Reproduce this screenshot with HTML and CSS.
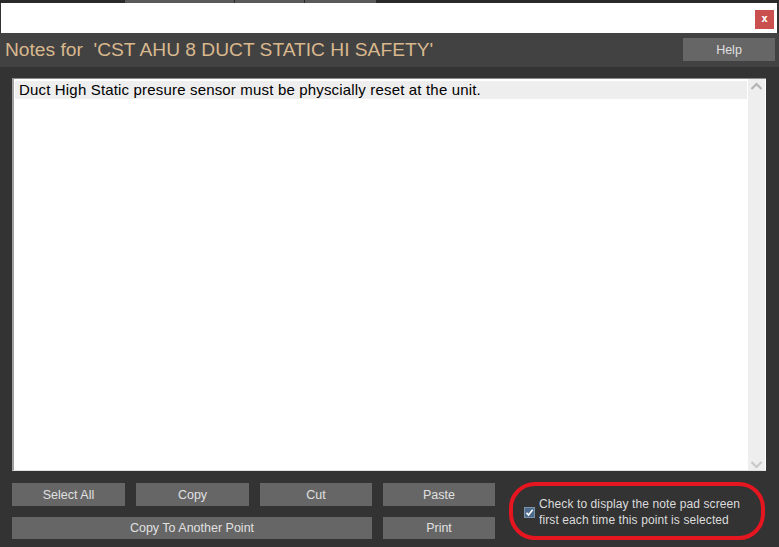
FILE: index.html
```html
<!DOCTYPE html>
<html>
<head>
<meta charset="utf-8">
<link rel="stylesheet" href="styles.css">
</head>
<body>
<div class="topstrip">
  <div class="tab tab1"></div>
  <div class="tab tab2"></div>
  <div class="tab tab3"></div>
</div>
<div class="titlebar">
  <div class="close">x</div>
</div>
<div class="header">
  <div class="title">Notes for&nbsp; 'CST AHU 8 DUCT STATIC HI SAFETY'</div>
  <div class="help">Help</div>
</div>
<div class="main">
  <div class="notebox">
    <div class="notetext">
      <div class="line">Duct High Static presure sensor must be physcially reset at the unit.</div>
    </div>
    <div class="scrollbar">
      <svg class="arrow" width="17" height="12" viewBox="0 0 17 12"><path d="M3.5 8 L8.5 3 L13.5 8" fill="none" stroke="#b4b4b4" stroke-width="2.2"/></svg>
      <svg class="arrow" width="17" height="12" viewBox="0 0 17 12"><path d="M3.5 4 L8.5 9 L13.5 4" fill="none" stroke="#c8c8c8" stroke-width="2.2"/></svg>
    </div>
  </div>
  <div class="bottom">
    <div class="buttons">
      <div class="btn">Select All</div>
      <div class="btn">Copy</div>
      <div class="btn">Cut</div>
      <div class="btn">Paste</div>
      <div class="btn wide">Copy To Another Point</div>
      <div class="btn">Print</div>
    </div>
    <div class="highlight">
      <div class="check"><svg width="11" height="11" viewBox="0 0 11 11"><path d="M2.5 5.8 L4.5 8 L8.7 2.8" fill="none" stroke="#fff" stroke-width="1.6"/></svg></div>
      <div class="checktext">Check to display the note pad screen<br>first each time this point is selected</div>
    </div>
  </div>
</div>
</body>
</html>
```
FILE: styles.css
```css
html, body {
  margin: 0;
  padding: 0;
}
body {
  width: 779px;
  height: 547px;
  overflow: hidden;
  background: #333333;
  font-family: "Liberation Sans", Arial, sans-serif;
}
.topstrip {
  height: 3px;
  background: #2a2a2a;
  display: flex;
}
.tab {
  height: 3px;
  background: #5a5a5a;
}
.tab1 { margin-left: 125px; width: 109px; }
.tab2 { margin-left: 1px; width: 69px; }
.tab3 { margin-left: 1px; width: 71px; }
.titlebar {
  height: 30px;
  background: #ffffff;
  display: flex;
  justify-content: flex-end;
  align-items: flex-start;
  padding-right: 3px;
  border-left: 1px solid #333;
  border-right: 2px solid #333;
}
.close {
  margin-top: 7px;
  width: 19px;
  height: 19px;
  background: #c9504f;
  color: #ffffff;
  font-family: "DejaVu Sans Mono", monospace;
  font-weight: bold;
  font-size: 11px;
  line-height: 18px;
  text-align: center;
}
.header {
  height: 34px;
  background: #424242;
  display: flex;
  justify-content: space-between;
  align-items: flex-start;
  padding: 0 4px 0 5px;
}
.title {
  color: #d9b88e;
  font-size: 19.2px;
  line-height: 34px;
}
.help {
  margin-top: 5px;
  width: 92px;
  height: 23px;
  background: #666666;
  color: #e0e0e0;
  font-size: 12.5px;
  line-height: 24px;
  text-align: center;
}
.main {
  padding: 11px 13px 0 12px;
}
.notebox {
  height: 391px;
  background: #ffffff;
  border-top: 1px solid #8a8a8a;
  border-left: 2px solid #a0a0a0;
  border-bottom: 1px solid #e0e0e0;
  display: flex;
  padding: 0 1px 0 0;
}
.notetext {
  flex: 1;
  padding: 2px 1px 0 1px;
}
.line {
  height: 18px;
  background: #eeeeee;
  color: #000000;
  font-size: 15px;
  letter-spacing: 0.17px;
  line-height: 18px;
  padding-left: 4px;
}
.scrollbar {
  width: 17px;
  background: #eeeeee;
  display: flex;
  flex-direction: column;
  justify-content: space-between;
  padding: 2px 0 0 0;
}
.arrow {
  display: block;
}
.bottom {
  display: flex;
  margin-top: 11px;
}
.buttons {
  margin-top: 1px;
  display: grid;
  grid-template-columns: 113px 113px 112px 112px;
  grid-template-rows: 23px 22px;
  column-gap: 11px;
  row-gap: 11px;
}
.btn {
  background: #666666;
  color: #e0e0e0;
  font-size: 12.5px;
  line-height: 24px;
  text-align: center;
}
.buttons .btn:nth-child(n+5) {
  line-height: 23px;
}
.wide {
  grid-column: 1 / 4;
}
.highlight {
  margin-left: 14px;
  width: 248px;
  height: 50px;
  border: 4px solid #e5161f;
  border-radius: 26px;
  display: flex;
  align-items: center;
  padding: 0;
}
.check {
  margin-left: 11px;
  margin-top: 2px;
  width: 11px;
  height: 11px;
  box-sizing: border-box;
  background: #4d6b8c;
  border: 1px solid #7c93aa;
  display: flex;
}
.check svg { display: block; margin: -1px; }
.checktext {
  margin-left: 4px;
  margin-top: 2px;
  color: #dcdcdc;
  font-size: 12px;
  letter-spacing: 0.1px;
  line-height: 16px;
}
```
